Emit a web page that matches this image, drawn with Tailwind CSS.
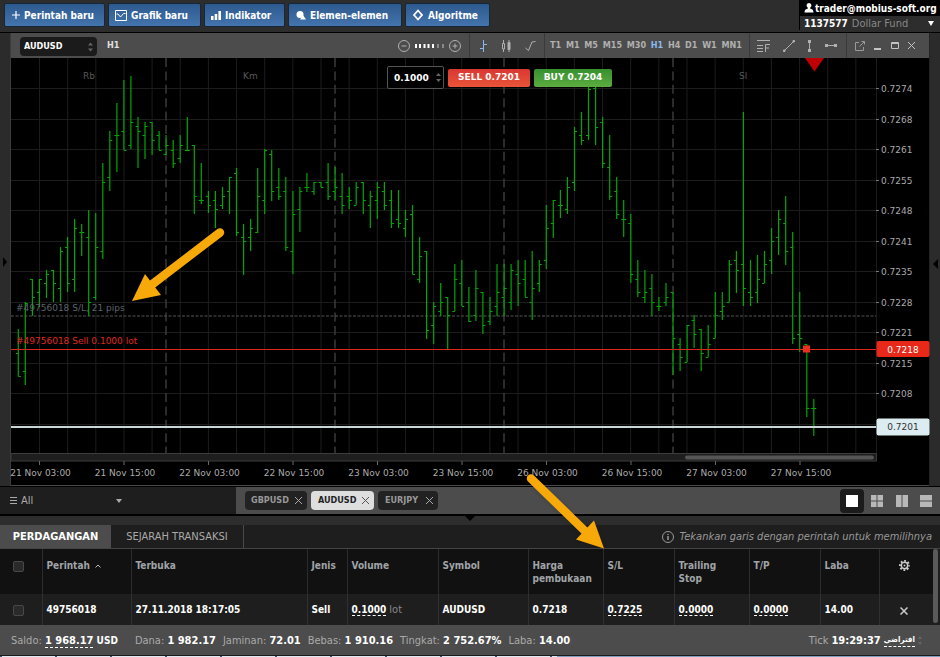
<!DOCTYPE html>
<html lang="id">

<head>
  <meta charset="UTF-8" />
  <meta name="viewport" content="width=device-width, initial-scale=1.0" />
  <title>AUDUSD H1</title>
  <script src="https://cdn.jsdelivr.net/npm/@tailwindcss/browser@4"></script>
</head>

<body class="relative flex h-screen flex-col overflow-hidden bg-[#2b2b2b] font-['DejaVu_Sans_Condensed','DejaVu_Sans',sans-serif] text-[10px] leading-[13px] text-white">

  <!-- Top bar -->
  <header class="flex h-[33px] shrink-0 items-start border-b border-black bg-[#2d2d2d]">
    <nav class="flex gap-[3px] pt-[3px] pl-1">
      <button class="flex h-6 w-[101px] items-center gap-[3px] rounded-xs border border-[#16273a] bg-linear-to-b from-[#2d5a8e] to-[#4474ad] pl-[6px] font-bold">
        <svg class="size-[10px]" viewBox="0 0 10 10" stroke="#fff" stroke-width="1.2"><path d="M5 1v8M1 5h8" /></svg>
        Perintah baru
      </button>
      <button class="flex h-6 w-[93px] items-center gap-1 rounded-xs border border-[#16273a] bg-linear-to-b from-[#2d5a8e] to-[#4474ad] pl-[6px] font-bold">
        <svg class="h-[11px] w-3" viewBox="0 0 12 11" fill="none" stroke="#fff"><path d="M.5.5h11v10H.5zM1.500 4h1.500l2.500 3 3-3.500h2" /></svg>
        Grafik baru
      </button>
      <button class="flex h-6 w-[81px] items-center gap-1 rounded-xs border border-[#16273a] bg-linear-to-b from-[#2d5a8e] to-[#4474ad] pl-[6px] font-bold">
        <svg class="size-[10px]" viewBox="0 0 10 10" fill="#fff"><path d="M0 6h2.500v4H0zM3.700 4h2.500v6H3.700zM7.400 1H10v9H7.400z" /></svg>
        Indikator
      </button>
      <button class="flex h-6 w-[114px] items-center gap-1 rounded-xs border border-[#16273a] bg-linear-to-b from-[#2d5a8e] to-[#4474ad] pl-[7px] font-bold">
        <svg class="size-[10px]" viewBox="0 0 10 10" fill="#fff"><circle cx="4" cy="4.500" r="3.500" /><path d="M7 5l3 4.500H4z" /></svg>
        Elemen-elemen
      </button>
      <button class="flex h-6 w-[85px] items-center gap-1 rounded-xs border border-[#16273a] bg-linear-to-b from-[#2d5a8e] to-[#4474ad] pl-[6px] font-bold">
        <svg class="size-3" viewBox="0 0 12 12" fill="none" stroke="#fff" stroke-width="1.800"><path d="M6 1.500L10 6 6 10.500 2 6z" /></svg>
        Algoritme
      </button>
    </nav>
    <div class="ml-auto w-[141px] border-l border-black">
      <div class="flex h-4 items-center gap-[1px] bg-black pl-1 font-bold">
        <svg class="h-[10px] w-[10px] shrink-0" viewBox="0 0 10 10" fill="#fff"><path d="M5 0a2.500 2.500 0 0 1 1.300 4.600v1.200C8.500 6.300 9.500 7 9.500 9.500h-9C.5 7 1.500 6.300 3.700 5.800V4.600A2.500 2.500 0 0 1 5 0z" /></svg>
        trader@mobius-soft.org
      </div>
      <button class="flex h-[14px] w-full items-center gap-1 pl-1">
        <b>1137577</b><span class="text-[11px] text-[#888]">Dollar Fund</span>
        <svg class="mr-[6px] ml-auto h-[5px] w-[6px]" viewBox="0 0 6 5" fill="#fff"><path d="M0 0h6L3 5z" /></svg>
      </button>
    </div>
  </header>

  <!-- Chart window -->
  <main class="flex min-h-0 flex-1">
    <aside class="flex w-[11px] items-center justify-start border-r border-[#3c3c3c]">
      <svg class="mt-1 ml-[2px] h-[10px] w-[6px]" viewBox="0 0 6 10"><path d="M1 0l4 5-4 5z" /></svg>
    </aside>

    <section class="relative flex min-w-0 flex-1 flex-col border-b border-[#4a4a4a]">
      <div class="flex h-[25px] shrink-0 items-stretch bg-[#4c4c4c] text-[9px] font-bold text-[#b0b0b0]">
        <div class="relative mt-1 ml-[9px] h-[19px]">
          <select aria-label="Symbol" class="h-[19px] w-[77px] appearance-none rounded-sm bg-[#1b1b1b] pl-1 text-[9px] font-bold text-white">
            <option>AUDUSD</option>
            <option>GBPUSD</option>
            <option>EURJPY</option>
          </select>
          <svg class="pointer-events-none absolute top-[5px] right-1 h-[10px] w-[5px]" viewBox="0 0 5 10" fill="#666"><path d="M0 3.500h5L2.500.5zM0 6.500h5L2.500 9.500z" /></svg>
        </div>
        <span class="self-center pl-[10px] text-[#e0e0e0]">H1</span>

        <div class="ml-auto flex items-center gap-[5px] pr-2">
          <button aria-label="Zoom out"><svg class="size-3" viewBox="0 0 12 12" fill="none" stroke="#b0b0b0"><circle cx="6" cy="6" r="5.500" /><path d="M3.500 6h5" /></svg></button>
          <svg class="h-1 w-[29px]" viewBox="0 0 29 4"><path stroke="#fff" stroke-width="2" d="M1 0v4M5 0v4M9.500 0v4M13.500 0v4M18 0v4" /><path stroke="#888" stroke-width="2" d="M23 0v4M28 0v4" /></svg>
          <button aria-label="Zoom in"><svg class="size-3" viewBox="0 0 12 12" fill="none" stroke="#b0b0b0"><circle cx="6" cy="6" r="5.500" /><path d="M3.500 6h5M6 3.500v5" /></svg></button>
        </div>
        <div class="flex w-[75px] items-center justify-between border-l border-[#3a3a3a] pr-2 pl-[10px]">
          <button aria-label="Bars"><svg class="h-3 w-[7px]" viewBox="0 0 7 12" fill="none" stroke="#8ab8ec"><path d="M3.500 0v12M3.500 4.500H7M0 8.500h3.500" /></svg></button>
          <button aria-label="Candles"><svg class="h-3 w-[10px]" viewBox="0 0 10 12" fill="none" stroke="#b0b0b0"><path d="M2.500 0v3.500M2.500 9v3M1.500 3.500h2V9h-2zM8 0v12" /><path d="M7 2.500h2v7H7z" fill="#b0b0b0" /></svg></button>
          <button aria-label="Line"><svg class="h-[10px] w-[11px]" viewBox="0 0 11 10" fill="none" stroke="#b0b0b0"><path d="M.5 7l3 2.500L7 1l3.500-.500" /></svg></button>
        </div>
        <div class="flex w-[205px] items-center justify-between border-l border-[#3a3a3a] pr-[7px] pl-[5px]">
          <button>T1</button>
          <button>M1</button>
          <button>M5</button>
          <button>M15</button>
          <button>M30</button>
          <button class="text-[#8ab8ec]">H1</button>
          <button>H4</button>
          <button>D1</button>
          <button>W1</button>
          <button>MN1</button>
        </div>
        <div class="flex w-[97px] items-center justify-between border-l border-[#3a3a3a] pr-[9px] pl-[7px]">
          <button aria-label="Fibonacci"><svg class="h-3 w-[13px]" viewBox="0 0 13 12" fill="none" stroke="#b0b0b0"><path d="M0 .5h13M0 5.500h6M0 8.500h6M0 11.500h6M8.500 12V4.500H13M8.500 8h3.500" /></svg></button>
          <button aria-label="Trend line"><svg class="size-3" viewBox="0 0 12 12" stroke="#b0b0b0"><path d="M1 11L11 1" /><path d="M.5 10h1.500v1.500H.5zM10 .5h1.500V2H10z" fill="#b0b0b0" /></svg></button>
          <button aria-label="Vertical line"><svg class="h-3 w-[5px]" viewBox="0 0 5 12" fill="#b0b0b0"><path d="M2 0h1v12H2zM1 0h3v3H1zM1 9h3v3H1z" /></svg></button>
          <button aria-label="Horizontal line"><svg class="h-[5px] w-3" viewBox="0 0 12 5" fill="#b0b0b0"><path d="M0 2h12v1H0zM0 1h3v3H0zM9 1h3v3H9z" /></svg></button>
        </div>
        <div class="flex w-[83px] items-center justify-between border-l border-[#3a3a3a] pr-[14px] pl-2">
          <button aria-label="Detach"><svg class="size-[10px]" viewBox="0 0 10 10" fill="none" stroke="#999"><path d="M4 1.500H.5v8h8V6M4.500 5.500l5-5M6.500.5h3v3" /></svg></button>
          <button aria-label="Minimize"><svg class="size-2" viewBox="0 0 8 8" fill="#c4c4c4"><path d="M0 6h7v2H0z" /></svg></button>
          <button aria-label="Maximize"><svg class="h-[7px] w-2" viewBox="0 0 8 7" fill="none" stroke="#c4c4c4"><path d="M.5.5h7v6h-7zM0 1.500h8" /></svg></button>
          <button aria-label="Close"><svg class="size-[7px]" viewBox="0 0 7 7" stroke="#c4c4c4"><path d="M0 0l7 7M7 0L0 7" /></svg></button>
        </div>
      </div>

      <svg id="chart" class="min-h-0 w-full flex-1 overflow-visible bg-black font-['DejaVu_Sans',sans-serif] text-[9px]" viewBox="11 58 918 427" preserveAspectRatio="xMaxYMin slice" fill="#aaa">
        <g id="grid" stroke="#1c1c1c"></g>
        <g id="days" stroke="#3a3a3a" stroke-width="1.500" stroke-dasharray="9 4.400"></g>
        <g fill="#5a5a5a">
          <text x="83" y="79">Rb</text>
          <text x="243" y="79">Km</text>
          <text x="739" y="79">Sl</text>
        </g>
        <path d="M11 316h865" stroke="#555" stroke-width="1.200" stroke-dasharray="3 1.500" />
        <path id="bars" stroke="#00a800" stroke-width="1.200" fill="none" />
        <text x="16" y="311" fill="#5d646b">#49756018 S/L, 21 pips</text>
        <text x="16" y="344" fill="#e0281a">#49756018 Sell 0.1000 lot</text>
        <path d="M11 349.500h865" stroke="#d8281a" />
        <path d="M803 345.500h7v7h-7z" fill="#ee2e1c" />
        <path d="M11 427h865" stroke="#c8d6d8" stroke-width="1.800" />
        <path d="M805 58h19l-9.500 13.500z" fill="#c00000" />

        <path d="M11 453.500h865.500v7.500H11z" fill="#1e1e1e" stroke="#3c3c3c" />
        <rect x="685" y="455.500" width="189" height="4" rx="2" fill="#555" />
        <g id="prices"></g>
        <g id="times" text-anchor="middle"></g>

        <rect x="876.500" y="341" width="53" height="16" rx="2" fill="#e8291a" />
        <text x="903" y="353" text-anchor="middle" fill="#fff">0.7218</text>
        <rect x="876.500" y="418.500" width="53" height="17" rx="2" fill="#dcecf0" />
        <text x="903" y="430" text-anchor="middle" fill="#333">0.7201</text>
      </svg>

      <!-- Quick trade -->
      <div class="absolute top-[33px] right-[317px] flex items-center gap-1 font-['DejaVu_Sans',sans-serif] text-[9px] font-bold">
        <div class="relative">
          <input aria-label="Volume" value="0.1000" class="block h-[23px] w-[57px] rounded-xs border border-[#555] bg-black pl-[6px]" />
          <svg class="pointer-events-none absolute top-[7px] right-[3px] h-[9px] w-[5px]" viewBox="0 0 5 9" fill="#666"><path d="M0 3h5L2.500 0zM0 6h5L2.500 9z" /></svg>
        </div>
        <button class="h-[18px] w-[82px] rounded-xs bg-linear-to-b from-[#d93632] to-[#ea5438]">SELL 0.7201</button>
        <button class="h-[18px] w-[78px] rounded-xs bg-linear-to-b from-[#36902f] to-[#5cac40]">BUY 0.7204</button>
      </div>
    </section>

    <aside class="flex w-[11px] items-center justify-end border-l border-[#222]">
      <svg class="mt-2 mr-[1px] h-[10px] w-[6px]" viewBox="0 0 6 10"><path d="M5 0L0 5l5 5z" /></svg>
    </aside>
  </main>

  <!-- Chart tabs -->
  <div class="flex h-[30px] shrink-0 items-stretch border-t border-b-2 border-black bg-[#4c4c4c]">
    <button class="flex w-[236px] items-center gap-1 bg-[#1e1e1e] pl-[10px] text-[11px] text-[#aaa]">
      <svg class="h-[7px] w-[7px]" viewBox="0 0 7 7" stroke="#aaa"><path d="M0 .5h7M0 3.500h7M0 6.500h7" /></svg>
      All
      <svg class="ml-[79px] h-1 w-[6px]" viewBox="0 0 6 4" fill="#aaa"><path d="M0 0h6L3 4z" /></svg>
    </button>
    <div class="flex items-center gap-1 pl-[9px] text-[9px] font-bold text-[#999]">
      <button class="flex h-[19px] w-[62px] items-center justify-between rounded-sm bg-[#222] pr-[5px] pl-[6px]">GBPUSD
        <svg class="size-[7px]" viewBox="0 0 7 7" stroke="#aaa"><path d="M0 0l7 7M7 0L0 7" /></svg></button>
      <button class="flex h-[19px] w-[63px] items-center justify-between rounded-sm bg-[#dedede] pr-[5px] pl-[7px] text-[#222]">AUDUSD
        <svg class="size-[7px]" viewBox="0 0 7 7" stroke="#555"><path d="M0 0l7 7M7 0L0 7" /></svg></button>
      <button class="flex h-[19px] w-[60px] items-center justify-between rounded-sm bg-[#222] pr-[5px] pl-[7px]">EURJPY
        <svg class="size-[7px]" viewBox="0 0 7 7" stroke="#aaa"><path d="M0 0l7 7M7 0L0 7" /></svg></button>
    </div>
    <div class="ml-auto flex items-center pr-[2px]">
      <button aria-label="Single" class="flex h-6 w-6 items-center justify-center rounded-sm bg-[#1b1b1b]"><svg class="size-3" viewBox="0 0 12 12" fill="#fff"><path d="M0 0h12v12H0z" /></svg></button>
      <button aria-label="Grid" class="flex h-6 w-[25px] items-center justify-center"><svg class="size-3" viewBox="0 0 12 12" fill="#b8b8b8"><path d="M0 0h5.500v5.500H0zM6.500 0H12v5.500H6.500zM0 6.500h5.500V12H0zM6.500 6.500H12V12H6.500z" /></svg></button>
      <button aria-label="Columns" class="flex h-6 w-[25px] items-center justify-center"><svg class="size-3" viewBox="0 0 12 12" fill="#b8b8b8"><path d="M0 0h5.500v12H0zM6.500 0H12v12H6.500z" /></svg></button>
      <button aria-label="Rows" class="flex h-6 w-6 items-center justify-center"><svg class="size-3" viewBox="0 0 12 12" fill="#b8b8b8"><path d="M0 0h12v5.500H0zM0 6.500h12V12H0z" /></svg></button>
    </div>
  </div>
  <div class="flex h-[9px] shrink-0 justify-center bg-[#2d2d2d]">
    <svg class="h-[5px] w-[10px]" viewBox="0 0 10 5"><path d="M0 0h10L5 5z" /></svg>
  </div>

  <!-- Orders -->
  <div class="flex h-6 shrink-0 items-stretch border-b border-[#444] bg-[#1e1e1e] text-[11px]">
    <button class="w-[111px] bg-[#4c4c4c] pb-[1px] font-bold">PERDAGANGAN</button>
    <button class="w-[133px] border-r border-[#4a4a4a] pb-[1px] text-[#aaa]">SEJARAH TRANSAKSI</button>
    <p class="ml-auto flex items-center gap-[6px] pr-2 text-[#999] italic">
      <svg class="size-3" viewBox="0 0 12 12" fill="none" stroke="#999"><circle cx="6" cy="6" r="5.500" /><path d="M6 5v4M6 3v1" stroke-width="1.500" /></svg>
      Tekankan garis dengan perintah untuk memilihnya
    </p>
  </div>
  <div class="flex shrink-0 bg-[#1e1e1e] pr-[2px]">
    <table class="w-full table-fixed text-left [&_td]:border-[#303030] [&_th]:border-[#2c2c2c] [&_td:not(:last-child)]:border-r [&_th:not(:last-child)]:border-r">
      <colgroup>
        <col class="w-[42px]" /><col class="w-[89px]" /><col /><col class="w-10" /><col class="w-[91px]" /><col class="w-[90px]" />
        <col class="w-[75px]" /><col class="w-[71px]" /><col class="w-[75px]" /><col class="w-[71px]" /><col class="w-[59px]" /><col class="w-[54px]" />
      </colgroup>
      <thead>
        <tr class="h-[45px] bg-[#111] align-top text-[#a0a4a8] [&>th]:pt-[10px] [&>th]:pl-1">
          <th class="pr-2 text-center"><input type="checkbox" aria-label="Pilih semua" class="mt-[2px] size-[11px] appearance-none rounded-xs border border-[#484848] bg-[#2a2a2a]" /></th>
          <th>Perintah <svg class="mb-[1px] ml-[2px] inline h-1 w-[6px]" viewBox="0 0 6 4" fill="none" stroke="#bbb"><path d="M.5 3.500L3 1l2.500 2.500" /></svg></th>
          <th>Terbuka</th>
          <th>Jenis</th>
          <th>Volume</th>
          <th>Symbol</th>
          <th>Harga pembukaan</th>
          <th>S/L</th>
          <th>Trailing<br />Stop</th>
          <th>T/P</th>
          <th>Laba</th>
          <th class="pr-2"><button aria-label="Pengaturan" class="mx-auto block"><svg class="mt-[1px] size-[11px]" viewBox="0 0 12 12" fill="none" stroke="#ccc"><circle cx="6" cy="6" r="3.500" stroke-width="1.600" /><circle cx="6" cy="6" r="5" stroke-width="2" stroke-dasharray="2 1.927" stroke-dashoffset="1" /><circle cx="6" cy="6" r="1" fill="#ccc" stroke="none" /></svg></button></th>
        </tr>
      </thead>
      <tbody>
        <tr class="h-[31px] font-bold [&>td]:pl-1">
          <td class="pr-2 text-center"><input type="checkbox" aria-label="Pilih 49756018" class="mt-1 size-[11px] appearance-none rounded-xs border border-[#484848] bg-[#2a2a2a]" /></td>
          <td>49756018</td>
          <td>27.11.2018 18:17:05</td>
          <td>Sell</td>
          <td><span class="border-b border-dashed border-white">0.1000</span> <span class="text-[11px] font-normal text-[#888]">lot</span></td>
          <td>AUDUSD</td>
          <td>0.7218</td>
          <td><span class="border-b border-dashed border-white">0.7225</span></td>
          <td><span class="border-b border-dashed border-white">0.0000</span></td>
          <td><span class="border-b border-dashed border-white">0.0000</span></td>
          <td>14.00</td>
          <td class="pr-2"><button aria-label="Tutup" class="mx-auto block"><svg class="mt-[2px] size-2" viewBox="0 0 8 8" stroke="#ccc" stroke-width="1.500"><path d="M.5.5l7 7M7.500.5l-7 7" /></svg></button></td>
        </tr>
      </tbody>
    </table>
    <div class="mb-[2px] w-[5px] shrink-0 rounded-full bg-[#5a5a5a]"></div>
  </div>

  <!-- Account summary -->
  <footer class="flex h-[30px] shrink-0 items-center bg-[#4c4c4c] pl-[11px] text-[11px] whitespace-nowrap text-[#aaa] [&_b]:text-white">
    <span class="pr-[17px]">Saldo: <b class="border-b border-dashed border-white">1 968.17</b> <b class="text-[10px]">USD</b></span>
    <span class="pr-[7px]">Dana: <b>1 982.17</b></span>
    <span class="pr-[7px]">Jaminan: <b>72.01</b></span>
    <span class="pr-[7px]">Bebas: <b>1 910.16</b></span>
    <span class="pr-[7px]">Tingkat: <b>2 752.67%</b></span>
    <span>Laba: <b>14.00</b></span>
    <span class="ml-auto flex items-center gap-[3px] pr-[18px]">Tick <b>19:29:37</b>
      <b dir="rtl" lang="ar" class="border-b border-dashed border-white text-[8px]">افتراضي</b>
      <svg class="h-[9px] w-1" viewBox="0 0 4 9" fill="#666"><path d="M0 3h4L2 0zM0 6h4L2 9z" /></svg></span>
  </footer>
  <div class="h-[2px] shrink-0 border-t border-[#1b1b1b] bg-[#7f9fc0]">
    <div class="h-[1px] w-[557px] bg-[repeating-linear-gradient(90deg,#3c5470_0_2px,#dfe9f2_2px_55px)]"></div>
  </div>

  <!-- Pointer arrows -->
  <svg class="pointer-events-none absolute inset-0 h-full w-full drop-shadow-sm" fill="#f8a90a" stroke="#f8a90a">
    <path d="M220 232.500L150 286" stroke-width="8.500" stroke-linecap="round" />
    <path d="M132 301l13-27 16 21z" stroke="none" />
    <path d="M531 478.500L587 533" stroke-width="8.500" stroke-linecap="round" />
    <path d="M604 548.500l-10-28-18 19z" stroke="none" />
  </svg>

  <script>
    const NS = 'http://www.w3.org/2000/svg';
    const add = (parent, tag, attrs, text) => {
      const el = document.createElementNS(NS, tag);
      for (const k in attrs) el.setAttribute(k, attrs[k]);
      if (text) el.textContent = text;
      document.getElementById(parent).appendChild(el);
    };

    // high, low, open, close for each hour, in chart units
    const bars = [
      [329,376,353,376],[302,385,371,303],[279,316,279,297],[279,307,292,279],[270,298,283,274],[270,302,270,283],[247,302,288,251],
      [237,292,247,283],[219,292,279,228],[224,256,232,232],[210,316,237,302],[213,300,297,247],[163,259,251,182],[131,191,177,140],
      [103,172,135,135],[80,150,131,150],[76,149,145,122],[117,168,126,131],[122,159,135,126],[122,155,122,140],[131,150,135,150],
      [135,155,154,145],[140,168,150,163],[135,163,158,145],[117,150,150,150],[145,214,145,196],[163,204,200,200],[191,213,196,205],
      [191,228,200,209],[187,209,205,196],[177,214,191,177],[168,236,173,232],[224,275,237,241],[219,251,237,228],[168,233,232,196],
      [149,214,200,150],[150,201,154,191],[168,200,187,196],[177,251,191,247],[191,274,251,214],[187,232,209,191],[173,192,187,187],
      [182,195,191,182],[182,187,182,187],[163,200,182,196],[167,200,191,187],[173,214,196,205],[187,209,196,200],[182,205,205,187],
      [182,214,182,200],[191,228,205,196],[182,219,200,187],[182,210,191,205],[190,228,200,223],[190,228,219,223],[210,237,228,219],
      [205,274,214,274],[237,283,279,256],[251,339,251,330],[302,344,325,306],[283,316,311,302],[297,349,297,315],[264,311,311,279],
      [260,306,283,306],[287,322,302,321],[270,321,315,288],[292,334,292,325],[297,325,321,311],[264,316,306,292],[264,316,297,288],
      [264,310,302,270],[260,306,274,283],[260,297,279,297],[251,320,302,288],[260,292,283,264],[205,269,260,228],[200,238,223,200],
      [190,218,205,205],[177,214,209,187],[127,191,182,131],[112,145,135,140],[87,140,135,89],[87,145,88,127],[117,168,122,163],
      [135,200,167,196],[177,219,191,214],[200,237,219,219],[214,283,223,274],[260,297,279,292],[270,303,297,292],[274,316,288,302],
      [297,311,306,306],[283,306,302,297],[292,375,292,338],[338,371,344,357],[325,362,362,325],[315,348,320,334],[329,371,329,353],
      [325,357,357,344],[292,338,338,315],[292,320,311,306],[260,302,302,264],[251,293,260,270],[112,306,264,288],[260,306,292,297],
      [255,303,292,279],[251,283,283,264],[228,274,260,241],[210,255,237,219],[196,265,223,251],[232,344,247,338],[292,352,334,338],
      [344,417,344,408],[399,436,408,408]
    ];
    document.getElementById('bars').setAttribute('d', bars.map(([h, l, o, c], i) => {
      const x = (18.3 + i * 7.04).toFixed(1);
      return `M${x} ${h}V${l}M${x} ${o + 0.5}h-2.500M${x} ${c + 0.5}h2.500`;
    }).join(''));

    for (let i = 0; i < 30; i++) {
      const x = 39.5 + i * 28.15;
      add('grid', 'path', { d: `M${x} 58V453` });
    }
    for (const x of [166, 335, 504, 673]) add('days', 'path', { d: `M${x} 58V453` });
    add('grid', 'path', { d: 'M876.5 58V453' });

    const prices = ['0.7274', '0.7268', '0.7261', '0.7255', '0.7248', '0.7241', '0.7235', '0.7228', '0.7221', '0.7215', '0.7208', ''];
    prices.forEach((p, i) => {
      const y = Math.round(88 + i * 30.5);
      add('grid', 'path', { d: `M11 ${y}.5H876` });
      if (!p) return;
      add('prices', 'path', { d: `M876 ${y}.5h3`, stroke: '#777' });
      add('prices', 'text', { x: 881, y: y + 4 }, p);
    });

    const times = ['21 Nov 03:00', '21 Nov 15:00', '22 Nov 03:00', '22 Nov 15:00', '23 Nov 03:00', '23 Nov 15:00', '26 Nov 03:00', '26 Nov 15:00', '27 Nov 03:00', '27 Nov 15:00'];
    times.forEach((t, i) => {
      const x = 39.5 + i * 84.5;
      add('times', 'path', { d: `M${x} 461v4`, stroke: '#666' });
      add('times', 'text', { x: x + 1, y: 476 }, t);
    });
  </script>
</body>

</html>
